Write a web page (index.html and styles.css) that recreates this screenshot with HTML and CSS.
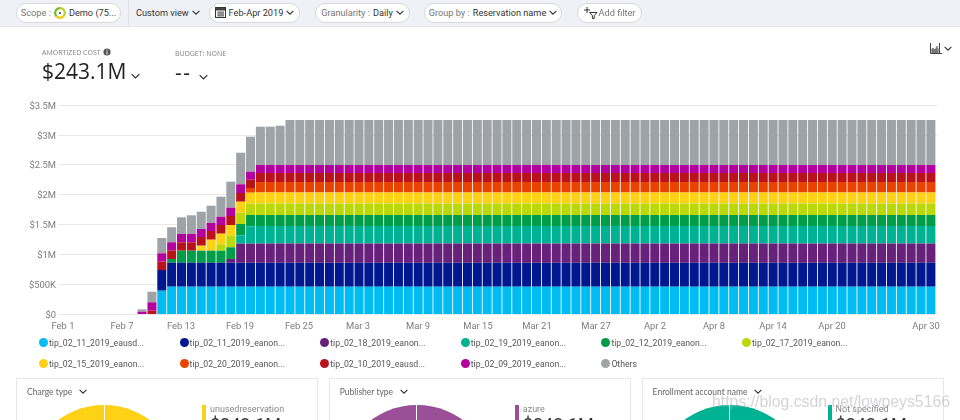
FILE: index.html
```html
<!DOCTYPE html>
<html lang="en">
<head>
<meta charset="utf-8">
<title>Cost analysis</title>
<link rel="stylesheet" href="styles.css">
</head>
<body>
<svg class="defs" width="0" height="0" aria-hidden="true">
  <symbol id="chev" viewBox="0 0 8 5"><polyline points="0.6,0.8 4,4.2 7.4,0.8"/></symbol>
</svg>
<div class="page">
  <header class="toolbar">
    <div class="pill pill-scope">
      <span class="muted">Scope :</span>
      <svg class="scope-icon" width="12" height="12" viewBox="0 0 12 12">
        <path class="ring-green" d="M6 1.2A4.8 4.8 0 0 0 2.6 9.4"/>
        <path class="ring-lime" d="M6 1.2A4.8 4.8 0 0 1 9.4 9.4"/>
        <path class="ring-yellow" d="M2.6 9.4A4.8 4.8 0 0 0 9.4 9.4"/>
        <circle class="ring-dot" cx="6" cy="6" r="1.1"/>
      </svg>
      <span class="strong">Demo (75...</span>
    </div>
    <div class="sep"></div>
    <div class="plain">Custom view <svg class="chev"><use href="#chev"/></svg></div>
    <div class="pill pill-date">
      <svg class="cal-icon" width="11" height="11" viewBox="0 0 11 11">
        <rect class="cal-head" x="0.5" y="0.5" width="10" height="3"/>
        <rect class="cal-body" x="0.5" y="0.5" width="10" height="10"/>
        <path class="cal-grid" d="M2 5.2h7M2 7h7M2 8.8h7M4 4.5v5M6 4.5v5M8 4.5v5"/>
      </svg>
      <span class="strong">Feb-Apr 2019</span>
      <svg class="chev"><use href="#chev"/></svg>
    </div>
    <div class="pill pill-gran">
      <span class="muted">Granularity :</span>
      <span class="strong">Daily</span>
      <svg class="chev"><use href="#chev"/></svg>
    </div>
    <div class="pill pill-group">
      <span class="muted">Group by :</span>
      <span class="strong">Reservation name</span>
      <svg class="chev"><use href="#chev"/></svg>
    </div>
    <div class="pill pill-filter">
      <svg class="filter-icon" width="14" height="13" viewBox="0 0 14 13">
        <path d="M3 1v6M0 4h6"/>
        <path d="M5.500 6.500h7.500L10.200 9.600v2.900H8.400V9.600z"/>
      </svg>
      <span class="muted">Add filter</span>
    </div>
  </header>

  <section class="kpis">
    <div class="kpi kpi-cost">
      <div class="kpi-label">AMORTIZED COST
        <svg class="info" width="8" height="8" viewBox="0 0 8 8"><circle cx="4" cy="4" r="3.6"/><path d="M4 3.400v3M4 1.600v1"/></svg>
      </div>
      <div class="kpi-value">$243.1M <svg class="chev chev-big"><use href="#chev"/></svg></div>
    </div>
    <div class="kpi kpi-budget">
      <div class="kpi-label">BUDGET: NONE</div>
      <div class="kpi-value"><span class="dashes">--</span> <svg class="chev chev-big"><use href="#chev"/></svg></div>
    </div>
    <div class="view-switch">
      <svg class="area-icon" width="12" height="11" viewBox="0 0 12 11">
        <path class="area-fill" d="M1 10V6l2-1 1.500 1.500L6 4l2 2 2-3v7z"/>
        <path class="area-line" d="M.5 0v10.500H12M3 5v5M5 6v4M7 3v7M9.500 0v10"/>
      </svg>
      <svg class="chev"><use href="#chev"/></svg>
    </div>
  </section>

  <svg id="chart" class="chart" width="960" height="235" viewBox="0 97 960 235" role="img" aria-label="Daily amortized cost by reservation name"></svg>

  <ul class="legend">
    <li><i class="dot c-cyan"></i>tip_02_11_2019_eausd...</li>
    <li><i class="dot c-navy"></i>tip_02_11_2019_eanon...</li>
    <li><i class="dot c-purple"></i>tip_02_18_2019_eanon...</li>
    <li><i class="dot c-teal"></i>tip_02_19_2019_eanon...</li>
    <li><i class="dot c-green"></i>tip_02_12_2019_eanon...</li>
    <li><i class="dot c-lime"></i>tip_02_17_2019_eanon...</li>
    <li><i class="dot c-yellow"></i>tip_02_15_2019_eanon...</li>
    <li><i class="dot c-orange"></i>tip_02_20_2019_eanon...</li>
    <li><i class="dot c-red"></i>tip_02_10_2019_eausd...</li>
    <li><i class="dot c-magenta"></i>tip_02_09_2019_eanon...</li>
    <li><i class="dot c-gray"></i>Others</li>
  </ul>

  <section class="cards">
    <article class="card">
      <div class="card-title">Charge type <svg class="chev"><use href="#chev"/></svg></div>
      <div class="card-body">
        <div class="pie c-yellow"></div>
        <div class="pie-legend b-yellow"><div class="pl-name">unusedreservation</div><div class="pl-value">$243.1M</div></div>
      </div>
    </article>
    <article class="card">
      <div class="card-title">Publisher type <svg class="chev"><use href="#chev"/></svg></div>
      <div class="card-body">
        <div class="pie c-plum"></div>
        <div class="pie-legend b-plum"><div class="pl-name">azure</div><div class="pl-value">$243.1M</div></div>
      </div>
    </article>
    <article class="card">
      <div class="card-title">Enrollment account name <svg class="chev"><use href="#chev"/></svg></div>
      <div class="card-body">
        <div class="pie c-teal"></div>
        <div class="pie-legend b-teal"><div class="pl-name">Not specified</div><div class="pl-value">$243.1M</div></div>
      </div>
    </article>
  </section>

  <div class="watermark">https://blog.csdn.net/lowpeys5166</div>
</div>
<script src="chart.js"></script>
</body>
</html>
```
FILE: styles.css
```css
* { box-sizing: border-box; }
html, body { margin: 0; padding: 0; background: #fff; }
body { width: 960px; height: 420px; overflow: hidden; font-family: Roboto, "Open Sans", sans-serif; color: #333; }
.defs { position: absolute; }
.page { position: relative; width: 960px; height: 420px; overflow: hidden; filter: blur(0.55px); }

.chev { width: 8px; height: 5px; fill: none; stroke: #333; stroke-width: 1.1; flex: none; }
.chev-big { width: 9px; height: 6px; }

.toolbar { display: flex; align-items: center; height: 27px; padding: 0 0 1px 16px; background: #f0f1f6; border-bottom: 1px solid #e3e3e8; font-size: 9.2px; }
.pill { display: flex; align-items: center; justify-content: center; gap: 3px; height: 20px; background: #fff; border: 1px solid #d8d8dc; border-radius: 10px; white-space: nowrap; }
.muted { color: #777; }
.strong { color: #333; }
.pill-scope { width: 105px; }
.sep { width: 1px; height: 26px; margin: 0 7px; background: #e0e0e6; }
.plain { display: flex; align-items: center; gap: 3px; width: 73px; white-space: nowrap; color: #333; }
.pill-date { width: 91px; margin-right: 15px; }
.pill-gran { width: 95px; margin-right: 14px; }
.pill-group { width: 138px; margin-right: 15px; }
.pill-filter { width: 65px; gap: 1px; }

.scope-icon { fill: none; flex: none; }
.scope-icon path { stroke-width: 2.2; fill: none; }
.ring-green { stroke: #7ab92d; }
.ring-lime { stroke: #b8d432; }
.ring-yellow { stroke: #f2c811; }
.ring-dot { fill: #3a5a40; }
.cal-body { fill: none; stroke: #333; }
.cal-head { fill: #444; }
.cal-grid { stroke: #555; stroke-width: 0.8; fill: none; }
.filter-icon { fill: none; stroke: #333; stroke-width: 1; flex: none; }

.kpis { display: flex; height: 70px; padding: 20px 8px 0 42px; font-family: "Open Sans", sans-serif; }
.kpi-label { display: flex; align-items: center; gap: 2px; height: 10px; font-size: 7px; color: #808080; white-space: nowrap; }
.kpi-value { display: flex; align-items: baseline; gap: 5px; font-size: 21px; line-height: 29px; color: #222; white-space: nowrap; }
.kpi-cost { width: 133px; }
.kpi-budget { padding-top: 1px; }
.dashes { letter-spacing: 1.5px; margin-right: 2px; }
.info circle { fill: #555; }
.info path { stroke: #fff; stroke-width: 1; }
.view-switch { display: flex; align-items: center; gap: 2px; margin-left: auto; height: 10px; margin-top: -4px; }
.area-fill { fill: #aaa; }
.area-line { fill: none; stroke: #444; stroke-width: 1; }

.chart { display: block; }
.grid { stroke: #e8e8e8; stroke-width: 1; }
.axis { font-size: 9.4px; fill: #7c7c7c; font-family: Roboto, sans-serif; }
.axis-y { text-anchor: end; }
.axis-x { text-anchor: middle; }

.legend { display: grid; grid-template-columns: repeat(6, 140.6px); grid-auto-rows: 21px; margin: 0 0 4px; padding: 0 0 0 39px; list-style: none; font-size: 8.7px; color: #555; }
.legend li { display: flex; align-items: center; gap: 1px; white-space: nowrap; }
.dot { width: 9px; height: 9px; border-radius: 50%; flex: none; }

.c-cyan { background: #00bcf2; fill: #00bcf2; }
.c-navy { background: #00188f; fill: #00188f; }
.c-purple { background: #68217a; fill: #68217a; }
.c-teal { background: #00b294; fill: #00b294; }
.c-green { background: #009e49; fill: #009e49; }
.c-lime { background: #bad80a; fill: #bad80a; }
.c-yellow { background: #fcd116; fill: #fcd116; }
.c-orange { background: #ea4300; fill: #ea4300; }
.c-red { background: #b9121b; fill: #b9121b; }
.c-magenta { background: #b4009e; fill: #b4009e; }
.c-gray { background: #9ea3a8; fill: #9ea3a8; }
.c-plum { background: #9b4f96; }

.cards { display: flex; gap: 10.800px; padding-left: 16px; }
.card { width: 302px; height: 90px; padding-top: 5px; border: 1px solid #e8e8e8; }
.card-title { display: flex; align-items: center; gap: 7px; height: 15px; margin-left: 10px; font-family: Lato, sans-serif; font-size: 8.500px; color: #666; white-space: nowrap; }
.card-body { display: flex; padding: 6px 0 0 9px; }
.pie { position: relative; flex: none; width: 156px; height: 156px; border-radius: 50%; margin-right: 20px; }
.pie::after { content: ""; position: absolute; left: 77.500px; top: 0; width: 1px; height: 78px; background: #fff; }
.pie-legend { height: 60px; padding-left: 4px; border-left: 4px solid; white-space: nowrap; }
.b-yellow { border-color: #fcd116; }
.b-plum { border-color: #9b4f96; }
.b-teal { border-color: #00b294; }
.pl-name { height: 9px; font-size: 9px; line-height: 9px; color: #888; }
.pl-value { font-size: 18px; line-height: 22px; color: #333; }

.watermark { position: absolute; left: 712px; top: 393px; font-family: "Liberation Sans", sans-serif; font-size: 15.800px; color: rgba(170, 170, 175, 0.5); white-space: nowrap; }
```
FILE: chart.js
```js
(function () {
  var NS = "http://www.w3.org/2000/svg";
  var svg = document.getElementById("chart");
  var BASE = 313.5, STEP = 29.83, PITCH = 9.86, BAR = 9, X10 = 157.3;

  function el(name, attrs, text) {
    var n = document.createElementNS(NS, name);
    for (var k in attrs) n.setAttribute(k, attrs[k]);
    if (text) n.textContent = text;
    svg.appendChild(n);
  }

  ["$0", "$500K", "$1M", "$1.5M", "$2M", "$2.5M", "$3M", "$3.5M"].forEach(function (t, i) {
    var y = Math.round(BASE - i * STEP) + 0.5;
    el("line", { x1: 58, x2: 937, y1: y, y2: y, "class": "grid" });
    el("text", { x: 56, y: y + 3.5, "class": "axis axis-y" }, t);
  });

  var ticks = [["Feb 1", 63], ["Feb 7", 122], ["Feb 13", 181], ["Feb 19", 240], ["Feb 25", 299],
    ["Mar 3", 358], ["Mar 9", 418], ["Mar 15", 478], ["Mar 21", 537], ["Mar 27", 596],
    ["Apr 2", 655], ["Apr 8", 714], ["Apr 14", 773], ["Apr 20", 832], ["Apr 30", 926]];
  ticks.forEach(function (t) {
    el("text", { x: t[1], y: 329, "class": "axis axis-x" }, t[0]);
  });

  /* Order: top of each stacked segment, from the top of the bar down (page y). */
  var S = ["gray", "magenta", "red", "orange", "yellow", "lime", "green", "teal", "purple", "navy", "cyan"];
  function full(g) { return [g, 165, 173, 182, 192.5, 203.5, 215, 226, 243.5, 262.7, 286.7]; }
  var _ = null;
  var early = {
    8:  [309.3, 311.7, _, _, _, _, _, _, _, _, _],
    9:  [291.7, 302.3, 310.7, _, _, _, _, _, _, _, _],
    10: [238, 253.3, 261.7, _, _, _, _, _, _, 270, 290.7],
    11: [227.3, 242.3, 250.3, _, _, _, 259, _, _, 262.7, 286.7],
    12: [217.3, 234, 242.3, _, _, _, 250.7, _, _, 262.7, 286.7],
    13: [215.3, 234, 242.3, _, _, _, 250.7, _, _, 262.7, 286.7],
    14: [211.7, 229, 237, _, 245.7, _, 250.7, _, _, 262.7, 286.7],
    15: [205.7, 223, 231, _, 239.7, _, 250.7, _, _, 262.7, 286.7],
    16: [196.7, 216.7, 225, _, 233.7, 244.3, 250.7, _, _, 262.7, 286.7],
    17: [181.7, 207.7, 216, _, 225, 235.7, 247.3, _, 259, 262.7, 286.7],
    18: [152.7, 184.3, 193, _, 201.7, 212.7, 224, 235.3, 243.7, 262.7, 286.7],
    19: [136.7, 171.7, 179.7, 188, 192.7, 203.7, 215, 226.3, 243.7, 262.7, 286.7],
    20: full(126.7), 21: full(126.7), 22: full(125.7)
  };

  for (var i = 8; i <= 88; i++) {
    var tops = early[i] || full(120);
    var x = X10 + (i - 10) * PITCH;
    for (var s = 0; s < S.length; s++) {
      if (tops[s] === null) continue;
      var next = BASE + 0.5;
      for (var j = s + 1; j < S.length; j++) {
        if (tops[j] !== null) { next = tops[j]; break; }
      }
      el("rect", { x: x.toFixed(2), y: tops[s], width: BAR, height: (next - tops[s]).toFixed(2), "class": "c-" + S[s] });
    }
  }
})();
```
